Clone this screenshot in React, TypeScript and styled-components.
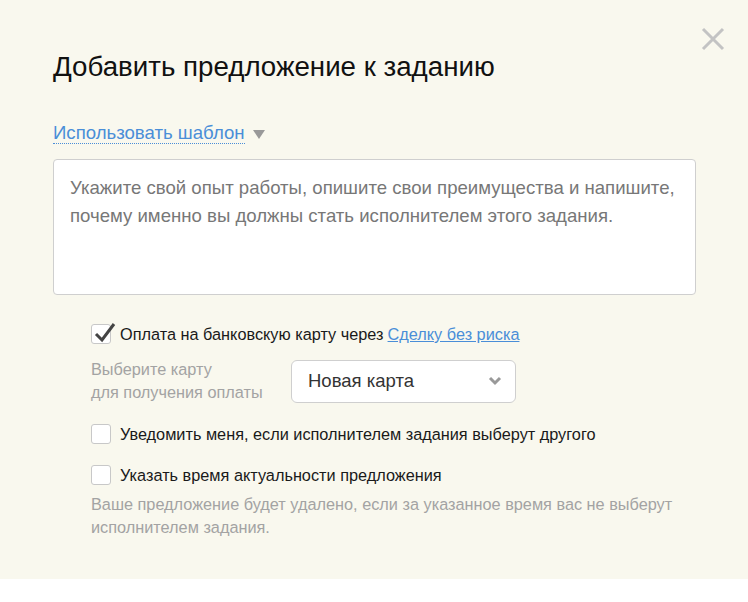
import React from 'react';
import styled, { createGlobalStyle } from 'styled-components';

const GlobalStyle = createGlobalStyle`
    html, body {
        margin: 0;
        padding: 0;
        background: #ffffff;
        font-family: "Liberation Sans", Arial, sans-serif;
    }
`;

const Panel = styled.div`
    position: relative;
    box-sizing: border-box;
    width: 748px;
    height: 579px;
    background: #f9f8ee;
    padding: 48px 52px 0 53px;
    color: #1a1a1a;
`;

const CloseButton = styled.button`
    position: absolute;
    top: 27px;
    right: 23px;
    width: 24px;
    height: 24px;
    padding: 0;
    border: 0;
    background: none;
    cursor: pointer;
`;

const Title = styled.h1`
    margin: 0;
    font-size: 27.7px;
    font-weight: normal;
    line-height: 38px;
    color: #111;
`;

const TemplateRow = styled.div`
    display: flex;
    align-items: center;
    gap: 8px;
    margin-top: 35px;
    height: 24px;
`;

const TemplateLink = styled.a`
    font-size: 18.6px;
    color: #4a8ed8;
    text-decoration: none;
    border-bottom: 1px dotted #4a8ed8;
    line-height: 21px;
`;

const Triangle = styled.span`
    width: 0;
    height: 0;
    border-left: 6px solid transparent;
    border-right: 6px solid transparent;
    border-top: 9px solid #999;
    margin-top: 2px;
`;

const TextArea = styled.textarea`
    display: block;
    box-sizing: border-box;
    width: 643px;
    height: 136px;
    margin-top: 14px;
    padding: 14px 16px;
    border: 1px solid #cfcfcf;
    border-radius: 4px;
    background: #fff;
    resize: none;
    font-family: "Liberation Sans", Arial, sans-serif;
    font-size: 18.6px;
    line-height: 28px;
    color: #333;
    outline: none;

    &::placeholder {
        color: #777;
    }
`;

const Options = styled.div`
    display: flex;
    flex-direction: column;
    padding-left: 38px;
    margin-top: 28px;
`;

const CheckRow = styled.label<{ $mt?: number }>`
    display: flex;
    align-items: center;
    gap: 9px;
    margin-top: ${p => p.$mt ?? 0}px;
    font-size: 16.3px;
    line-height: 22px;
    color: #1a1a1a;
`;

const Box = styled.span`
    position: relative;
    box-sizing: border-box;
    width: 20px;
    height: 20px;
    flex: none;
    background: #fff;
    border: 1px solid #c8c8c8;
    border-radius: 3px;

    svg {
        position: absolute;
        left: 1px;
        top: -5px;
    }
`;

const InlineLink = styled.a`
    color: #4a8ed8;
    text-decoration: underline;
    margin-left: 4px;
`;

const CardRow = styled.div`
    display: flex;
    align-items: center;
    margin-top: 13px;
`;

const CardLabel = styled.div`
    width: 200px;
    font-size: 16.3px;
    line-height: 23px;
    color: #a3a3a3;
`;

const Select = styled.div`
    box-sizing: border-box;
    display: flex;
    align-items: center;
    justify-content: space-between;
    width: 225px;
    height: 43px;
    padding: 0 13px 0 16px;
    background: #fff;
    border: 1px solid #cfcfcf;
    border-radius: 6px;
    font-size: 18.5px;
    color: #333;
`;

const Hint = styled.div`
    margin-top: 7px;
    font-size: 16.3px;
    line-height: 23px;
    color: #a3a3a3;
`;

const Check = () => (
    <svg width="24" height="24" viewBox="0 0 24 24">
        <path d="M3 14 L9 20 L21 4" fill="none" stroke="#444" strokeWidth="3" />
    </svg>
);

const Checkbox = ({ checked }: { checked?: boolean }) => (
    <Box>{checked && <Check />}</Box>
);

const App = () => {
    return (
        <>
            <GlobalStyle />
            <Panel>
                <CloseButton aria-label="Закрыть">
                    <svg width="24" height="24" viewBox="0 0 24 24">
                        <path d="M2 2 L22 22 M22 2 L2 22" stroke="#c3c3c3" strokeWidth="3" />
                    </svg>
                </CloseButton>

                <Title>Добавить предложение к заданию</Title>

                <TemplateRow>
                    <TemplateLink href="#">Использовать шаблон</TemplateLink>
                    <Triangle />
                </TemplateRow>

                <TextArea placeholder="Укажите свой опыт работы, опишите свои преимущества и напишите, почему именно вы должны стать исполнителем этого задания." />

                <Options>
                    <CheckRow>
                        <Checkbox checked />
                        <span>
                            Оплата на банковскую карту через
                            <InlineLink href="#">Сделку без риска</InlineLink>
                        </span>
                    </CheckRow>

                    <CardRow>
                        <CardLabel>
                            Выберите карту<br />для получения оплаты
                        </CardLabel>
                        <Select>
                            <span>Новая карта</span>
                            <svg width="14" height="10" viewBox="0 0 14 10">
                                <path d="M2 2 L7 7 L12 2" fill="none" stroke="#999" strokeWidth="3" />
                            </svg>
                        </Select>
                    </CardRow>

                    <CheckRow $mt={19}>
                        <Checkbox />
                        <span>Уведомить меня, если исполнителем задания выберут другого</span>
                    </CheckRow>

                    <CheckRow $mt={19}>
                        <Checkbox />
                        <span>Указать время актуальности предложения</span>
                    </CheckRow>

                    <Hint>
                        Ваше предложение будет удалено, если за указанное время вас не выберут<br />
                        исполнителем задания.
                    </Hint>
                </Options>
            </Panel>
        </>
    );
};

export default App;
